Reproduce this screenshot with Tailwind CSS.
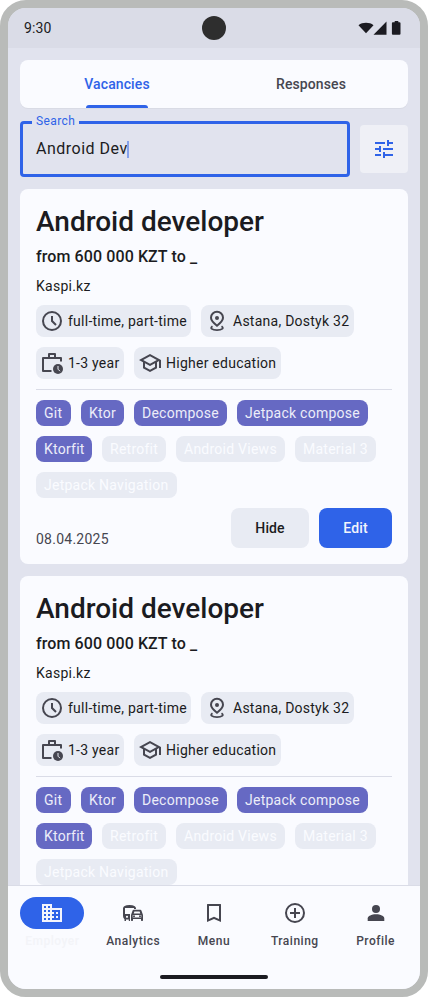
<!DOCTYPE html>
<html lang="en">
<head>
<meta charset="utf-8">
<title>Vacancies</title>
<script src="https://cdn.jsdelivr.net/npm/@tailwindcss/browser@4"></script>
</head>
<body class="bg-white font-['Roboto',sans-serif] text-[#1b1b21]">
<svg class="hidden">
  <symbol id="clock" viewBox="0 0 24 24"><circle cx="12" cy="12" r="9" fill="none" stroke="currentColor" stroke-width="2"/><path fill="currentColor" d="m15.3 16.7 1.4-1.4-3.7-3.7V7h-2v5.4z"/></symbol>
  <symbol id="pin" viewBox="0 0 24 24"><path fill="none" stroke="currentColor" stroke-width="2" d="M12 16.7C8 13.500 6 11.200 6 8.700a6 5.900 0 0 1 12 0c0 2.500-2 4.800-6 8z"/><circle cx="12" cy="8.900" r="2" fill="currentColor"/><path fill="none" stroke="currentColor" stroke-width="1.800" d="M7.500 17.200C4.500 19.200 7 21.100 12 21.100s7.500-1.900 4.500-3.900"/></symbol>
  <symbol id="work" viewBox="0 0 24 24"><path fill="none" stroke="currentColor" stroke-width="2" stroke-linejoin="round" d="M11.500 20H3V7h18v3.500M9 7V3h6v4"/><circle cx="18" cy="18" r="5" fill="currentColor"/><path fill="none" stroke="#e8ebf3" stroke-width="1" d="M18 15v3.200l2 2"/></symbol>
  <symbol id="school" viewBox="0 0 24 24"><path fill="currentColor" d="M12 3 1 9l4 2.180v6L12 21l7-3.820v-6l2-1.090V17h2V9L12 3zm6.820 6L12 12.720 5.180 9 12 5.280 18.820 9zM17 15.990l-5 2.730-5-2.730v-3.720L12 15l5-2.730v3.720z"/></symbol>
</svg>
<div class="flex h-[997px] w-[428px] flex-col overflow-hidden rounded-[26px] border-8 border-[#b9bbb9] bg-[#e1e3ee]">
  <header class="flex h-10 shrink-0 items-center justify-between bg-[#dadce7] px-4">
    <span class="w-[62px] text-sm leading-5 tracking-[0.14px]">9:30</span>
    <span class="size-6 rounded-full bg-[#2e2e2e]"></span>
    <svg class="h-4 w-[62px] text-[#1b1b21]" viewBox="3 0 62 16" fill="currentColor"><path d="M19.500 5.200C23.500 2 30.500 2 34.500 5.200L27 13.200z"/><path d="M34.500 14.700 47.500 1.500v13.200zM53.500 2.200h2.200V1h3.600v1.200h1.200q1 0 1 1v10.600q0 1-1 1h-6.600q-1 0-1-1V3.200q0-1 1-1z"/></svg>
  </header>
  <main class="flex min-h-0 flex-1 flex-col overflow-hidden px-3 pt-3">
    <nav class="flex h-12 shrink-0 rounded-lg bg-[#fafbff] text-sm font-medium leading-5 tracking-[0.1px] shadow-[0_1px_0_#d9dbe5]">
      <div class="flex flex-1 flex-col items-center pt-[14px] text-[#2f63e8]">Vacancies<span class="mt-auto h-[3px] w-[62px] rounded-t-[3px] bg-[#2f63e8]"></span></div>
      <div class="flex flex-1 flex-col items-center pt-[14px] text-[#464650]">Responses</div>
    </nav>
    <div class="mt-[13px] flex h-14 shrink-0 items-center gap-[10px]">
      <div class="relative flex h-14 w-[330px] items-center rounded border-[3px] border-[#2f63e8] pl-[13px]">
        <span class="absolute -top-[11px] left-[9px] bg-[#e1e3ee] px-1 text-xs leading-4 tracking-[0.4px] text-[#2f63e8]">Search</span>
        <span class="text-base leading-6 tracking-[0.5px]">Android Dev</span><span class="-ml-px h-[17px] w-[2px] bg-[#86a1eb]"></span>
      </div>
      <div class="flex size-12 items-center justify-center rounded bg-[#eff0f6]"><svg class="size-6 text-[#2f63e8]" viewBox="0 0 24 24" fill="currentColor"><path d="M3 17v2h6v-2H3zM3 5v2h10V5H3zm10 16v-2h8v-2h-8v-2h-2v6h2zM7 9v2H3v2h4v2h2V9H7zm14 4v-2H11v2h10zm-6-4h2V7h4V5h-4V3h-2v6z"/></svg></div>
    </div>
    <section id="jobs" class="mt-3 flex flex-col gap-3">
      <article class="flex h-[375px] shrink-0 flex-col rounded-lg bg-[#fafbff] px-4 pb-4 pt-[15px]">
        <h2 class="text-[28px] font-medium leading-9">Android developer</h2>
        <p class="mt-[5px] text-base font-medium leading-6 tracking-[0.1px]">from 600 000 KZT to _</p>
        <p class="mt-[7px] text-sm leading-5 tracking-[0.25px]">Kaspi.kz</p>
        <div class="mt-[9px] flex flex-wrap gap-[10px] text-sm leading-5 tracking-[0.25px]">
          <span class="flex h-8 w-[155px] items-center gap-1 whitespace-nowrap rounded-lg bg-[#e8ebf3] pl-1"><svg class="size-6 shrink-0 text-[#464650]"><use href="#clock"/></svg>full-time, part-time</span>
          <span class="flex h-8 w-[153px] items-center gap-1 whitespace-nowrap rounded-lg bg-[#e8ebf3] pl-1"><svg class="size-6 shrink-0 text-[#464650]"><use href="#pin"/></svg>Astana, Dostyk 32</span>
          <span class="flex h-8 w-[88px] items-center gap-1 whitespace-nowrap rounded-lg bg-[#e8ebf3] pl-1"><svg class="size-6 shrink-0 text-[#464650]"><use href="#work"/></svg>1-3 year</span>
          <span class="flex h-8 w-[147px] items-center gap-1 whitespace-nowrap rounded-lg bg-[#e8ebf3] pl-1"><svg class="size-6 shrink-0 text-[#464650]"><use href="#school"/></svg>Higher education</span>
        </div>
        <hr class="mt-[10px] border-t border-[#dadce7]">
        <div class="mt-[10px] flex flex-wrap gap-[10px] whitespace-nowrap text-sm leading-[26px] tracking-[0.25px] text-[#ecedf9]">
          <span class="h-[26px] w-[35px] rounded-lg bg-[#6669c3] pl-2">Git</span>
          <span class="h-[26px] w-[43px] rounded-lg bg-[#6669c3] pl-2">Ktor</span>
          <span class="h-[26px] w-[93px] rounded-lg bg-[#6669c3] pl-2">Decompose</span>
          <span class="h-[26px] w-[131px] rounded-lg bg-[#6669c3] pl-2">Jetpack compose</span>
          <span class="h-[26px] w-[56px] rounded-lg bg-[#6669c3] pl-2">Ktorfit</span>
          <span class="h-[26px] w-[64px] rounded-lg bg-[#e8ebf3] pl-2 text-[#fafbff]">Retrofit</span>
          <span class="h-[26px] w-[109px] rounded-lg bg-[#e8ebf3] pl-2 text-[#fafbff]">Android Views</span>
          <span class="h-[26px] w-[81px] rounded-lg bg-[#e8ebf3] pl-2 text-[#fafbff]">Material 3</span>
          <span class="h-[26px] w-[141px] rounded-lg bg-[#e8ebf3] pl-2 text-[#fafbff]">Jetpack Navigation</span>
        </div>
        <div class="mt-auto flex h-10 items-end gap-[10px] text-sm font-medium leading-5 tracking-[0.1px]">
          <time class="mr-auto -mb-px font-normal tracking-[0.25px] text-[#464650]">08.04.2025</time>
          <button class="h-10 w-[78px] rounded-lg bg-[#e8ebf3]">Hide</button>
          <button class="h-10 w-[73px] rounded-lg bg-[#2f63e8] text-[#f3f4fc]">Edit</button>
        </div>
      </article>
    </section>
  </main>
  <footer class="flex h-[104px] shrink-0 flex-col items-center border-t border-[#dadce7] bg-[#fafbff]">
    <nav class="flex h-[89px] w-[404px] shrink-0 pt-[11px] text-xs font-medium leading-4 tracking-[0.5px] text-[#464650]">
      <div class="flex flex-1 flex-col items-center gap-1"><span class="flex h-8 w-16 items-center justify-center rounded-full bg-[#2f63e8] text-[#f3f4fc]"><svg class="size-6" viewBox="0 0 24 24" fill="currentColor"><path d="M12 7V3H2v18h20V7H12zM6 19H4v-2h2v2zm0-4H4v-2h2v2zm0-4H4V9h2v2zm0-4H4V5h2v2zm4 12H8v-2h2v2zm0-4H8v-2h2v2zm0-4H8V9h2v2zm0-4H8V5h2v2zm10 12h-8v-2h2v-2h-2v-2h2v-2h-2V9h8v10zm-2-8h-2v2h2v-2zm0 4h-2v2h2v-2z"/></svg></span><span class="text-[#f3f4f8]">Employer</span></div>
      <div class="flex flex-1 flex-col items-center gap-1"><span class="flex h-8 items-center"><svg class="size-6" viewBox="0 0 24 24" fill="currentColor"><path fill-rule="evenodd" d="M3.500 20v-1.700Q2 17 2 15V7.500Q2 4 8.500 4T15 7.500V8h-2V7H4v6h5v7H7.800v-1.500H5V20zM6 14.700a1.100 1.100 0 1 0 0 2.200 1.100 1.100 0 0 0 0-2.200z"/><path fill-rule="evenodd" d="m10 14 1.500-4.300q.3-.9 1.200-.9h6.600q.9 0 1.200.9L22 14v5.300q0 .7-.7.7h-.6q-.7 0-.7-.7V18h-8v1.300q0 .7-.7.7h-.6q-.7 0-.7-.7zM12.700 12.500h6.600l-.7-2h-5.200zM11.700 14v2.500h8.600V14z"/><path d="M13 14.200a1 1 0 1 0 0 2 1 1 0 0 0 0-2zm6 0a1 1 0 1 0 0 2 1 1 0 0 0 0-2z"/></svg></span>Analytics</div>
      <div class="flex flex-1 flex-col items-center gap-1"><span class="flex h-8 items-center"><svg class="size-6" viewBox="0 0 24 24" fill="currentColor"><path fill-rule="evenodd" d="M5.500 3h13q.5 0 .5.500V21l-7-3-7 3V3.500q0-.5.500-.5zM7 5v13l5-2.180L17 18V5z"/></svg></span>Menu</div>
      <div class="flex flex-1 flex-col items-center gap-1"><span class="flex h-8 items-center"><svg class="size-6" viewBox="0 0 24 24" fill="none" stroke="currentColor" stroke-width="2"><circle cx="12" cy="12" r="9"/><path d="M12 7v10M7 12h10"/></svg></span>Training</div>
      <div class="flex flex-1 flex-col items-center gap-1"><span class="flex h-8 items-center"><svg class="size-6" viewBox="0 0 24 24" fill="currentColor"><circle cx="12" cy="8" r="4"/><path d="M3.700 20v-2.500C3.700 15 7.500 13.300 12 13.300s8.300 1.700 8.300 4.200V20z"/></svg></span>Profile</div>
    </nav>
    <span class="h-1 w-[108px] rounded-full bg-[#1b1b21]"></span>
  </footer>
</div>
<script>
  // Two postings share the same content.
  const jobs = document.getElementById('jobs');
  jobs.append(jobs.firstElementChild.cloneNode(true));
</script>
</body>
</html>
